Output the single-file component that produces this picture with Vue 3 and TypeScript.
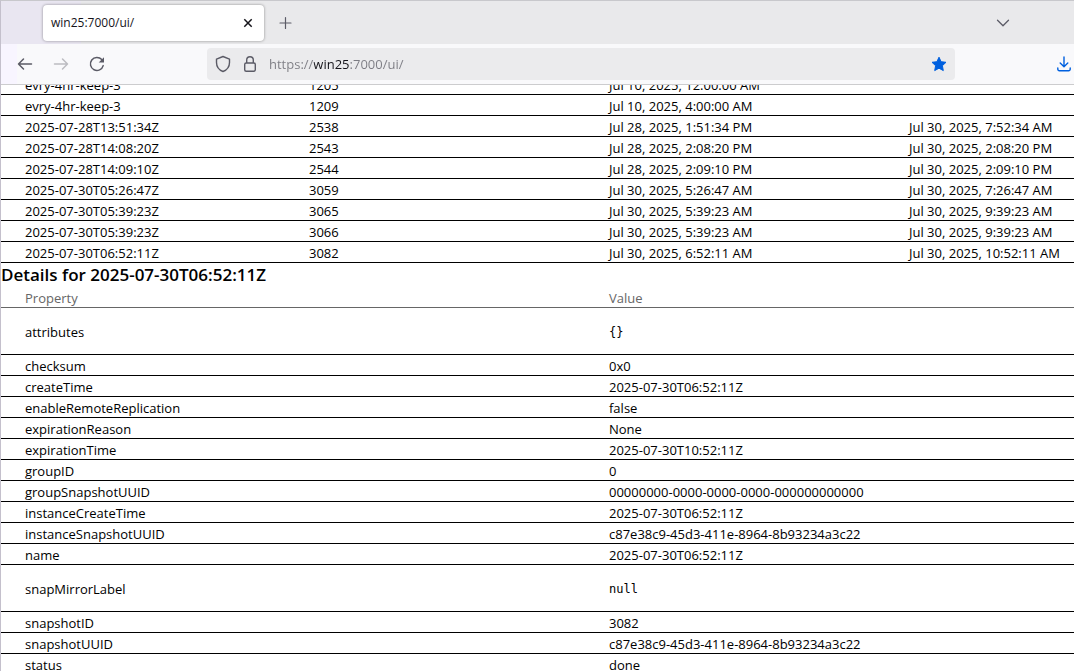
<script setup lang="ts">
import { onMounted, ref } from 'vue'

interface Snapshot {
  name: string
  id: number
  created: string
  expires?: string
}

interface Detail {
  property: string
  value: string
  json?: boolean
}

const snapshots: Snapshot[] = [
  { name: 'evry-4hr-keep-3', id: 1205, created: 'Jul 10, 2025, 12:00:00 AM' },
  { name: 'evry-4hr-keep-3', id: 1209, created: 'Jul 10, 2025, 4:00:00 AM' },
  { name: '2025-07-28T13:51:34Z', id: 2538, created: 'Jul 28, 2025, 1:51:34 PM', expires: 'Jul 30, 2025, 7:52:34 AM' },
  { name: '2025-07-28T14:08:20Z', id: 2543, created: 'Jul 28, 2025, 2:08:20 PM', expires: 'Jul 30, 2025, 2:08:20 PM' },
  { name: '2025-07-28T14:09:10Z', id: 2544, created: 'Jul 28, 2025, 2:09:10 PM', expires: 'Jul 30, 2025, 2:09:10 PM' },
  { name: '2025-07-30T05:26:47Z', id: 3059, created: 'Jul 30, 2025, 5:26:47 AM', expires: 'Jul 30, 2025, 7:26:47 AM' },
  { name: '2025-07-30T05:39:23Z', id: 3065, created: 'Jul 30, 2025, 5:39:23 AM', expires: 'Jul 30, 2025, 9:39:23 AM' },
  { name: '2025-07-30T05:39:23Z', id: 3066, created: 'Jul 30, 2025, 5:39:23 AM', expires: 'Jul 30, 2025, 9:39:23 AM' },
  { name: '2025-07-30T06:52:11Z', id: 3082, created: 'Jul 30, 2025, 6:52:11 AM', expires: 'Jul 30, 2025, 10:52:11 AM' },
]

const details: Detail[] = [
  { property: 'attributes', value: '{}', json: true },
  { property: 'checksum', value: '0x0' },
  { property: 'createTime', value: '2025-07-30T06:52:11Z' },
  { property: 'enableRemoteReplication', value: 'false' },
  { property: 'expirationReason', value: 'None' },
  { property: 'expirationTime', value: '2025-07-30T10:52:11Z' },
  { property: 'groupID', value: '0' },
  { property: 'groupSnapshotUUID', value: '00000000-0000-0000-0000-000000000000' },
  { property: 'instanceCreateTime', value: '2025-07-30T06:52:11Z' },
  { property: 'instanceSnapshotUUID', value: 'c87e38c9-45d3-411e-8964-8b93234a3c22' },
  { property: 'name', value: '2025-07-30T06:52:11Z' },
  { property: 'snapMirrorLabel', value: 'null', json: true },
  { property: 'snapshotID', value: '3082' },
  { property: 'snapshotUUID', value: 'c87e38c9-45d3-411e-8964-8b93234a3c22' },
  { property: 'status', value: 'done' },
]

const address = ref('https://win25:7000/ui/')
const page = ref<HTMLElement | null>(null)

onMounted(() => {
  if (page.value) page.value.scrollTop = 11
})
</script>

<template>
  <div class="window">
    <header class="tabs">
      <div class="tab">
        <span class="tab-title">win25:7000/ui/</span>
        <button class="icon-button close" type="button" aria-label="Close tab">
          <svg width="10" height="10" viewBox="0 0 10 10"><path d="M1.3 1.3l7.4 7.4M8.7 1.3L1.3 8.7" stroke="#15141a" stroke-width="1.5" /></svg>
        </button>
      </div>
      <button class="icon-button" type="button" aria-label="New tab">
        <svg width="14" height="14" viewBox="0 0 14 14"><path d="M7.500 1.500v11M2 7h11" stroke="#5b5b66" stroke-width="1.2" stroke-linecap="round" /></svg>
      </button>
      <button class="icon-button list" type="button" aria-label="List all tabs">
        <svg width="14" height="14" viewBox="0 0 14 14" fill="none"><path d="M1.5 4.2L7 9.7l5.500-5.500" stroke="#5b5b66" stroke-width="1.3" stroke-linecap="round" stroke-linejoin="round" /></svg>
      </button>
    </header>

    <nav class="toolbar" aria-label="Navigation">
      <div class="history">
        <button class="icon-button" type="button" aria-label="Back">
          <svg width="16" height="16" viewBox="0 0 16 16" fill="none" stroke="#5b5b66" stroke-width="1.5" stroke-linecap="round" stroke-linejoin="round"><path d="M14.500 8H1.500M6.500 3L1.500 8l5 5" /></svg>
        </button>
        <button class="icon-button" type="button" aria-label="Forward" disabled>
          <svg width="16" height="16" viewBox="0 0 16 16" fill="none" stroke="#bcbcc1" stroke-width="1.5" stroke-linecap="round" stroke-linejoin="round"><path d="M1.500 8h13M9.500 3l5 5-5 5" /></svg>
        </button>
        <button class="icon-button" type="button" aria-label="Reload">
          <svg width="16" height="16" viewBox="0 0 16 16" fill="none" stroke="#5b5b66" stroke-width="1.5" stroke-linecap="round"><path d="M14.200 9.600A6.500 6.500 0 1 1 12.800 3.600" /><path d="M15 1.200v5.300H9.700z" fill="#5b5b66" stroke="none" /></svg>
        </button>
      </div>
      <div class="address">
        <button class="icon-button" type="button" aria-label="Tracking protection">
          <svg width="16" height="18" viewBox="0 0 16 18" fill="none" stroke="#5b5b66" stroke-width="1.4" stroke-linejoin="round"><path d="M8 1.500L14.500 4.100V7.500C14.500 11.500 11.800 15 8 16.500 4.200 15 1.500 11.500 1.500 7.500V4.100z" /></svg>
        </button>
        <button class="icon-button" type="button" aria-label="Connection security">
          <svg width="14" height="18" viewBox="0 0 14 18" fill="none" stroke="#5b5b66" stroke-width="1.4"><rect x="1.700" y="8" width="10.600" height="8.300" rx="1.500" /><path d="M3.700 8V5a3.300 3.300 0 0 1 6.600 0v3" /></svg>
        </button>
        <input v-model="address" class="url" type="text" aria-label="Address" spellcheck="false" />
        <button class="icon-button" type="button" aria-label="Edit bookmark">
          <svg width="16" height="16" viewBox="0 0 16 16"><path d="M8 1.200l2.100 4.500 4.900.6-3.600 3.400.9 4.900L8 12.200l-4.300 2.400.9-4.900L1 6.300l4.900-.6z" fill="#0060df" stroke="#0060df" stroke-width="1" stroke-linejoin="round" /></svg>
        </button>
      </div>
      <button class="icon-button" type="button" aria-label="Downloads">
        <svg width="14" height="16" viewBox="0 0 14 16" fill="none" stroke="#0060df" stroke-width="1.4" stroke-linecap="round" stroke-linejoin="round"><path d="M7 1v9.500M3.200 7L7 10.700 10.800 7M.8 12v1.200a1.500 1.500 0 0 0 1.500 1.500h9.400a1.500 1.500 0 0 0 1.500-1.500V12" /></svg>
      </button>
    </nav>

    <main ref="page" class="page">
      <table class="grid" aria-label="Snapshots">
        <colgroup>
          <col class="col-name" />
          <col class="col-wide" />
          <col class="col-wide" />
          <col />
        </colgroup>
        <tbody>
          <tr v-for="row in snapshots" :key="row.id">
            <td>{{ row.name }}</td>
            <td>{{ row.id }}</td>
            <td>{{ row.created }}</td>
            <td>{{ row.expires }}</td>
          </tr>
        </tbody>
      </table>
      <h3 class="heading">Details for 2025-07-30T06:52:11Z</h3>
      <table class="grid">
        <colgroup>
          <col class="col-property" />
          <col />
        </colgroup>
        <thead>
          <tr>
            <th scope="col">Property</th>
            <th scope="col">Value</th>
          </tr>
        </thead>
        <tbody>
          <tr v-for="row in details" :key="row.property">
            <td>{{ row.property }}</td>
            <td>
              <pre v-if="row.json">{{ row.value }}</pre>
              <template v-else>{{ row.value }}</template>
            </td>
          </tr>
        </tbody>
      </table>
    </main>
  </div>
</template>

<style>
body {
  margin: 0;
}
</style>

<style scoped>
.window {
  box-sizing: border-box;
  display: flex;
  flex-direction: column;
  height: 100vh;
  border-top: 1px solid #c8c8cc;
  border-left: 1px solid #c4c0cc;
  background: #fff;
  color: #000;
  font-family: "Segoe UI", "Open Sans", "Noto Sans", sans-serif;
  font-size: 13px;
}

.icon-button {
  display: flex;
  align-items: center;
  justify-content: center;
  flex: none;
  padding: 0;
  border: 0;
  background: none;
}

.tabs {
  display: flex;
  align-items: center;
  flex: none;
  gap: 14px;
  height: 43px;
  padding-left: 42px;
  background: linear-gradient(90deg, #e9e6f1 80px, #e9e9eb 80px);
}

.tab {
  box-sizing: border-box;
  display: flex;
  align-items: center;
  justify-content: space-between;
  width: 221px;
  height: 36px;
  padding: 0 11px 0 8px;
  border-radius: 4px;
  background: #fff;
  box-shadow: 0 0 3px rgba(0, 0, 0, 0.4);
  font-size: 12px;
  color: #15141a;
}

.list {
  margin-left: auto;
  margin-right: 64px;
}

.toolbar {
  display: flex;
  align-items: center;
  flex: none;
  gap: 102px;
  height: 40px;
  padding-right: 3px;
  border-bottom: 1px solid #ccccce;
  background: linear-gradient(90deg, #f8f5ff 16px, #f9f9fb 16px);
}

.history {
  display: flex;
  gap: 20px;
  padding-left: 16px;
}

.address {
  display: flex;
  align-items: center;
  flex: 1;
  gap: 12px;
  height: 32px;
  padding: 0 8px;
  border-radius: 4px;
  background: #ebebed;
}

.url {
  flex: 1;
  min-width: 0;
  padding: 0;
  border: 0;
  outline: 0;
  background: linear-gradient(90deg, #7c7c83 45px, #15141a 45px, #15141a 81px, #7c7c83 81px);
  background-clip: text;
  color: transparent;
  caret-color: #15141a;
  font: inherit;
}

.page {
  flex: 1;
  min-height: 0;
  overflow-y: auto;
  scrollbar-width: none;
}

.grid {
  width: 100%;
  table-layout: fixed;
  border-collapse: collapse;
  line-height: 18px;
}

.col-name {
  width: 284px;
}

.col-wide {
  width: 300px;
}

.col-property {
  width: 584px;
}

td,
th {
  padding: 2px 0 0 24px;
  border-bottom: 1px solid #000;
  text-align: left;
  white-space: nowrap;
}

th {
  border-bottom-color: #666;
  color: #666;
  font-weight: 400;
}

pre {
  margin: 13px 0;
  font-family: "DejaVu Sans Mono", monospace;
  font-size: 12px;
}

.heading {
  margin: 0;
  font-size: 17px;
  font-weight: 600;
  line-height: 24px;
}
</style>
